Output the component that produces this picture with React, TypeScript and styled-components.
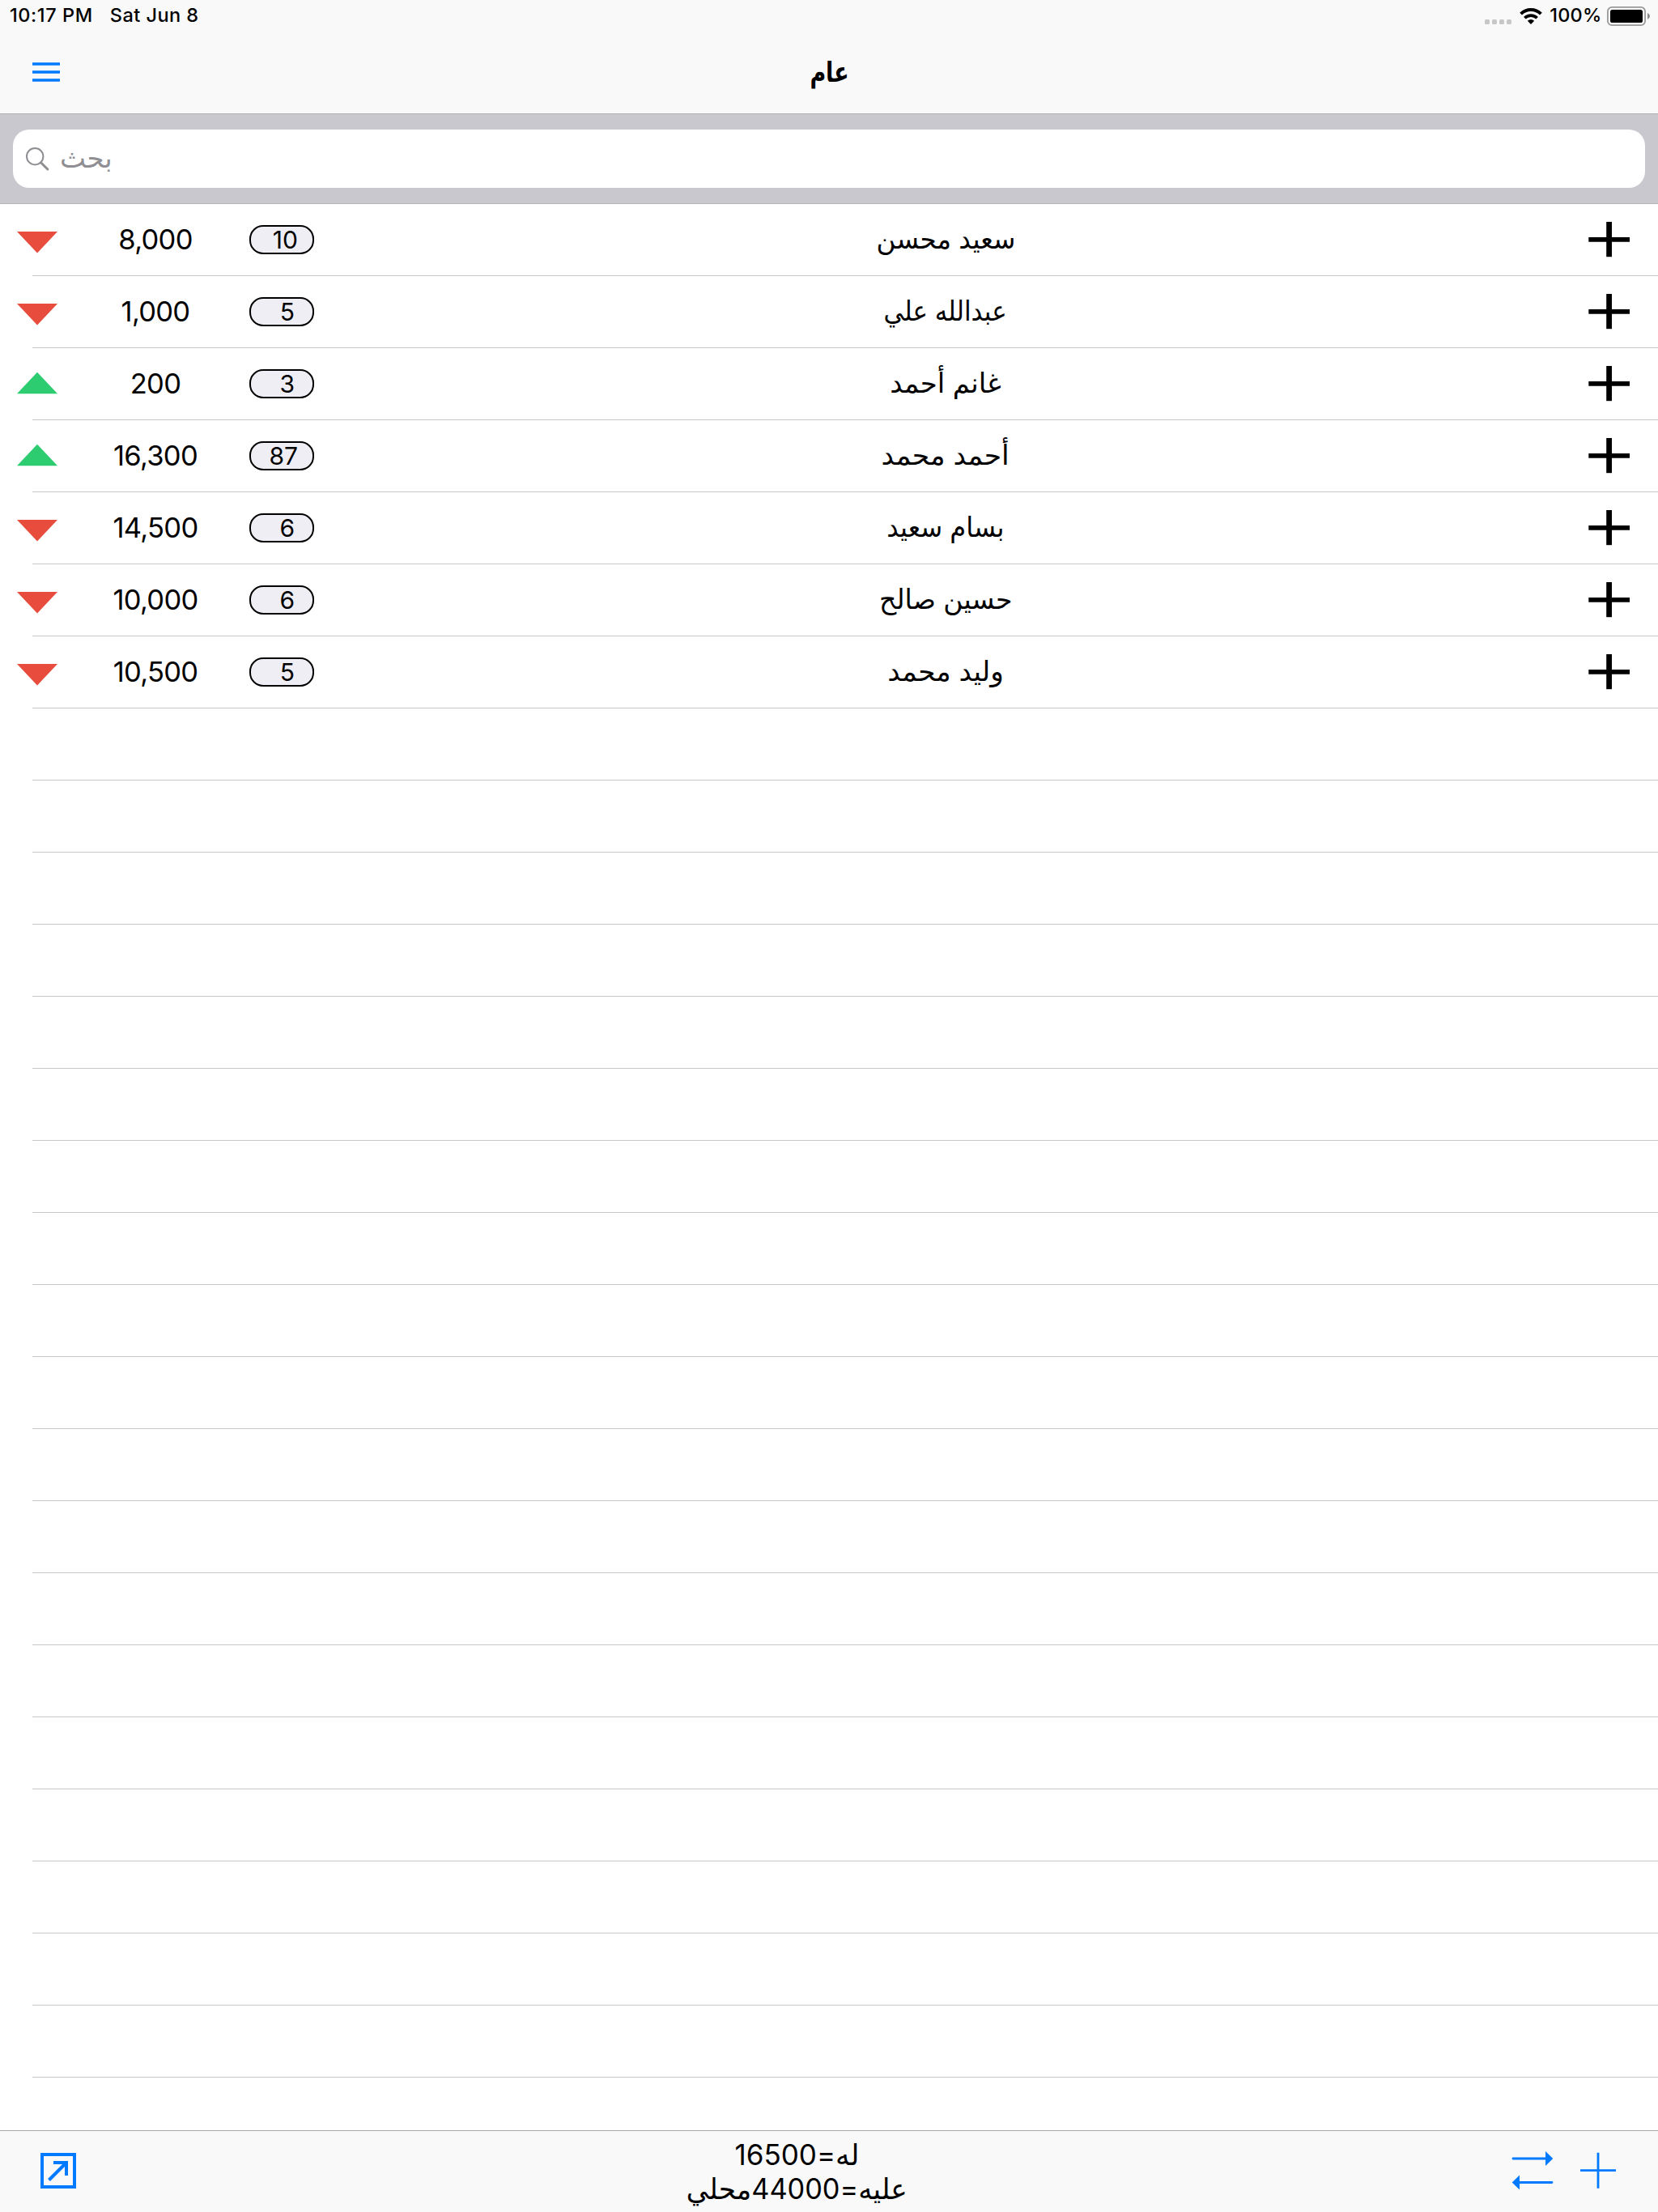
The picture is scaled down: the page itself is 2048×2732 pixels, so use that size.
import React from "react";
import styled, { createGlobalStyle } from "styled-components";

const BLUE = "#007aff";

const GlobalStyle = createGlobalStyle`
  * { box-sizing: border-box; }
  body { margin: 0; background: #fff; color: #000; font-family: Inter, "DejaVu Sans", sans-serif; }
  svg { display: block; flex: none; }
`;

const Screen = styled.div`
  width: 2048px;
  height: 2732px;
  display: flex;
  flex-direction: column;
  overflow: hidden;
  background: #fff;
`;

const Header = styled.header`
  height: 141px;
  flex: none;
  background: #f9f9f9;
  border-bottom: 1px solid #b2b2b2;
`;

const StatusBar = styled.div`
  height: 40px;
  display: flex;
  align-items: center;
  justify-content: space-between;
  padding: 0 10px 0 12px;
  font-size: 23.5px;
  line-height: 28px;
  font-weight: 500;
`;

const StatusGroup = styled.div<{ $gap: number }>`
  display: flex;
  align-items: center;
  gap: ${(p) => p.$gap}px;
  white-space: pre;
`;

const StatusText = styled.span<{ $spacing: number }>`
  padding-bottom: 2px;
  letter-spacing: ${(p) => p.$spacing}px;
`;

const NavBar = styled.div`
  height: 100px;
  display: grid;
  grid-template-columns: 1fr auto 1fr;
  padding: 0 40px;
`;

const MenuButton = styled.div`
  padding-top: 37px;
`;

const Title = styled.h1`
  margin: 0;
  padding-top: 27px;
  font-size: 34px;
  line-height: 44px;
  font-weight: 700;
`;

const SearchBar = styled.div`
  height: 111px;
  flex: none;
  padding: 19px 16px;
  background: #c9c8ce;
  border-bottom: 1px solid #b2b2b2;
`;

const SearchField = styled.div`
  height: 72px;
  display: flex;
  align-items: center;
  gap: 13px;
  padding-left: 16px;
  border-radius: 20px;
  background: #fff;
  color: #8e8e93;
  font-size: 34px;
  line-height: 44px;
`;

const Placeholder = styled.span`
  padding-bottom: 3px;
`;

const List = styled.main`
  flex: 1;
  min-height: 0;
  overflow: hidden;
`;

const Row = styled.div`
  height: 89px;
  display: flex;
  align-items: center;
  padding: 0 35px 1px 21px;
  background: linear-gradient(#c8c7cc, #c8c7cc) 40px 88px / 2008px 1px no-repeat;
`;

const Amount = styled.div`
  width: 242px;
  text-align: center;
  font-size: 34.5px;
  line-height: 44px;
  letter-spacing: -0.7px;
`;

const Badge = styled.div<{ $single: boolean }>`
  width: 80px;
  height: 36px;
  margin-left: -5px;
  padding-right: ${(p) => (p.$single ? 22 : 18)}px;
  border: 2px solid #000;
  border-radius: 17px;
  background: #efeef4;
  text-align: right;
  font-size: 30px;
  line-height: 32px;
`;

const Name = styled.div`
  flex: 1;
  display: flex;
  justify-content: center;
  padding-bottom: 2px;
  font-size: 34px;
  line-height: 44px;
`;

const Fitted = styled.span<{ $scale?: number }>`
  display: inline-block;
  white-space: nowrap;
  transform: scaleX(${(p) => p.$scale ?? 1});
`;

const Toolbar = styled.footer`
  height: 101px;
  flex: none;
  display: grid;
  grid-template-columns: 850px 269px 1fr;
  background: #f9f9f9;
  border-top: 1px solid #a9a9ad;
`;

const ToolbarStart = styled.div`
  padding: 27px 0 0 50px;
`;

const ToolbarEnd = styled.div`
  display: flex;
  justify-content: flex-end;
  gap: 33px;
  padding: 23px 52px 0 0;
`;

const Totals = styled.div`
  display: flex;
  flex-direction: column;
  align-items: center;
  padding-top: 8px;
  font-size: 35px;
  line-height: 42px;
`;

const DownTriangle = () => (
  <svg width="50" height="50"><path d="M0 15H50L25 41.5Z" fill="#e74c3c" /></svg>
);

const UpTriangle = () => (
  <svg width="50" height="50"><path d="M0 37.3H50L25 10.7Z" fill="#2ecc71" /></svg>
);

const RowPlus = () => (
  <svg width="65" height="50" stroke="#000">
    <path d="M14.3 24.8H65" strokeWidth="5.8" />
    <path d="M39.6 3V46.2" strokeWidth="6.8" />
  </svg>
);

const MenuIcon = () => (
  <svg width="34" height="24"><path d="M0 2H34M0 12H34M0 22H34" stroke={BLUE} strokeWidth="3.4" /></svg>
);

const SearchIcon = () => (
  <svg width="29" height="29" fill="none" stroke="#8e8e93">
    <circle cx="11.2" cy="11.2" r="10.2" strokeWidth="2" />
    <path d="M18.5 18.8L26.8 27" strokeWidth="3" strokeLinecap="round" />
  </svg>
);

const WifiIcon = () => (
  <svg width="28" height="20" fill="none" stroke="#000" strokeWidth="4">
    <path d="M1.6 7.2A17.6 17.6 0 0 1 26.4 7.2" />
    <path d="M6.4 12.2A10.8 10.8 0 0 1 21.6 12.2" strokeWidth="3.7" />
    <path d="M14 20L9.8 15.8Q14 12 18.2 15.8Z" fill="#000" stroke="none" />
  </svg>
);

const SignalDots = () => (
  <svg width="33" height="20" fill="#c7c7c7">
    {[0, 9, 18, 27].map((x) => <rect key={x} x={x} y="14" width="6" height="6" rx="1.6" />)}
  </svg>
);

const BatteryIcon = () => (
  <svg width="53" height="24">
    <rect x="0.9" y="0.9" width="46.2" height="22.2" rx="5.2" fill="none" stroke="#999" strokeWidth="1.8" />
    <rect x="4" y="4" width="40" height="16" rx="2.6" />
    <path d="M50 8Q53 9.5 53 12T50 16Z" fill="#8c8c8c" />
  </svg>
);

const ExportIcon = () => (
  <svg width="44" height="44" fill="none" stroke={BLUE} strokeWidth="4">
    <rect x="2" y="2" width="40" height="40" />
    <path d="M10.5 33.5L31 13" />
    <path d="M16 12H32V28" />
  </svg>
);

const TransferIcon = () => (
  <svg width="52" height="50" fill={BLUE}>
    <path d="M2 11H43M10 40.5H50" stroke={BLUE} strokeWidth="2.8" strokeLinecap="round" />
    <path d="M42 2L51.3 11L42 20Z" />
    <path d="M10 31.5L0.7 40.5L10 49.5Z" />
  </svg>
);

const AddIcon = () => (
  <svg width="44" height="50"><path d="M0 25.7H44M22 3.7V47.7" stroke={BLUE} strokeWidth="2.8" /></svg>
);

type Account = { name: string; amount: string; count: number; up?: boolean; scale: number };

const accounts: Account[] = [
  { name: "سعيد محسن", amount: "8,000", count: 10, scale: 0.96 },
  { name: "عبدالله علي", amount: "1,000", count: 5, scale: 0.91 },
  { name: "غانم أحمد", amount: "200", count: 3, up: true, scale: 1 },
  { name: "أحمد محمد", amount: "16,300", count: 87, up: true, scale: 1.02 },
  { name: "بسام سعيد", amount: "14,500", count: 6, scale: 0.945 },
  { name: "حسين صالح", amount: "10,000", count: 6, scale: 0.975 },
  { name: "وليد محمد", amount: "10,500", count: 5, scale: 1.01 },
];

const EMPTY_ROWS = 19;

export default function App() {
  return (
    <Screen>
      <GlobalStyle />
      <Header>
        <StatusBar>
          <StatusGroup $gap={21}>
            <StatusText $spacing={0.6}>10:17 PM</StatusText>
            <StatusText $spacing={0.45}>Sat Jun 8</StatusText>
          </StatusGroup>
          <StatusGroup $gap={9.5}>
            <SignalDots />
            <WifiIcon />
            <StatusGroup $gap={6.5}>
              <StatusText $spacing={0.2}>100%</StatusText>
              <BatteryIcon />
            </StatusGroup>
          </StatusGroup>
        </StatusBar>
        <NavBar>
          <MenuButton><MenuIcon /></MenuButton>
          <Title dir="rtl"><Fitted $scale={0.79}>عام</Fitted></Title>
        </NavBar>
      </Header>
      <SearchBar>
        <SearchField>
          <SearchIcon />
          <Placeholder dir="rtl">بحث</Placeholder>
        </SearchField>
      </SearchBar>
      <List>
        {accounts.map((a) => (
          <Row key={a.name}>
            {a.up ? <UpTriangle /> : <DownTriangle />}
            <Amount>{a.amount}</Amount>
            <Badge $single={a.count < 10}>{a.count}</Badge>
            <Name dir="rtl"><Fitted $scale={a.scale}>{a.name}</Fitted></Name>
            <RowPlus />
          </Row>
        ))}
        {Array.from({ length: EMPTY_ROWS }, (_, i) => <Row key={i} />)}
      </List>
      <Toolbar>
        <ToolbarStart><ExportIcon /></ToolbarStart>
        <Totals dir="rtl">
          <Fitted>له=16500</Fitted>
          <Fitted $scale={0.98}>عليه=44000محلي</Fitted>
        </Totals>
        <ToolbarEnd>
          <TransferIcon />
          <AddIcon />
        </ToolbarEnd>
      </Toolbar>
    </Screen>
  );
}
